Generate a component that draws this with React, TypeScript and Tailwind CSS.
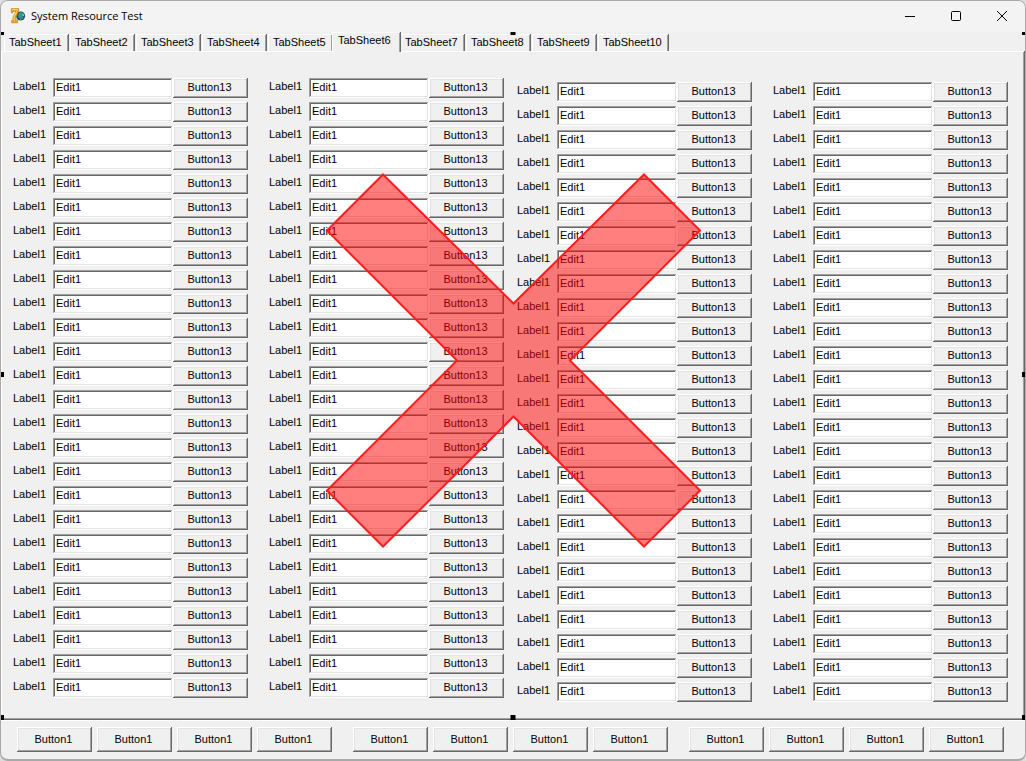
import { useState } from "react";

const TABS = Array.from({ length: 10 }, (_, index) => `TabSheet${index + 1}`);
const ROWS = Array.from({ length: 26 }, (_, index) => index);

const RAISED =
  "bg-[#f0f0f0] shadow-[inset_-1px_-1px_#696969,inset_1px_1px_#ffffff,inset_-2px_-2px_#a0a0a0,inset_2px_2px_#e3e3e3]";
const SUNKEN =
  "bg-white shadow-[inset_-1px_-1px_#ffffff,inset_1px_1px_#a0a0a0,inset_-2px_-2px_#e3e3e3,inset_2px_2px_#696969]";

const AppIcon = () => (
  <svg className="h-4 w-4 shrink-0" viewBox="0 0 16 16" aria-hidden="true">
    <circle cx="10.6" cy="8" r="4.5" fill="#1c4f83" />
    <path d="M8.500 5.500 11 4l2.500 2-1 2.500 1 1.500-3 2-1.500-2.500-1-1z" fill="#2f9a78" />
    <path d="M12 5l2 1.500v2l-1.500-1z" fill="#7cc4d8" />
    <path
      d="M1.300.6h7.400v2.200L6 9.200v3.200h1.600v2.400H1.600v-2.400H3V9l3-5.600H2.700v1.400H1.300z"
      fill="#f0a81c"
      stroke="#b8741c"
      strokeWidth=".6"
    />
    <path d="M1.900 1.400h5.900M6.700 3.400 4.200 8.800v4.200" fill="none" stroke="#ffe07a" strokeWidth=".9" />
  </svg>
);

const TitleBar = () => (
  <header className="flex h-[31px] items-center bg-[#f3f3f3] pb-px pl-[9px]">
    <AppIcon />
    <h1 className="ml-[5px] flex-1 font-['Open_Sans','Noto_Sans',sans-serif] text-[11px] leading-4">
      System Resource Test
    </h1>
    <button type="button" aria-label="Minimize" className="flex h-full w-[46px] items-center justify-center">
      <svg className="h-3 w-3" viewBox="0 0 12 12" stroke="#000" fill="none">
        <path d="M1 6.5h10" />
      </svg>
    </button>
    <button type="button" aria-label="Maximize" className="flex h-full w-[46px] items-center justify-center">
      <svg className="h-3 w-3" viewBox="0 0 12 12" stroke="#000" fill="none">
        <rect x="1.5" y="1.5" width="9" height="9" rx="1" />
      </svg>
    </button>
    <button type="button" aria-label="Close" className="flex h-full w-[46px] items-center justify-center">
      <svg className="h-3 w-3" viewBox="0 0 12 12" stroke="#000" fill="none">
        <path d="m1 1 10 10M11 1 1 11" />
      </svg>
    </button>
  </header>
);

const Tabs = ({
  selected,
  onSelect,
}: Readonly<{ selected: string; onSelect: (tab: string) => void }>) => (
  <div role="tablist" className="flex h-[19px] items-end gap-px pl-[3px]">
    {TABS.map((tab) => (
      <button
        key={tab}
        type="button"
        role="tab"
        aria-selected={tab === selected}
        className={
          tab === selected
            ? "z-10 -mx-0.5 -mb-px h-5 min-w-[69px] bg-[#f0f0f0] pr-2 pb-1 pl-1.5 text-left shadow-[inset_-1px_0_#696969,inset_1px_1px_#ffffff,inset_-2px_0_#a0a0a0]"
            : "h-[17px] min-w-[65px] pr-[7px] pb-px pl-[5px] text-left shadow-[inset_-1px_0_#696969,inset_1px_1px_#ffffff,inset_-2px_0_#a0a0a0]"
        }
        onClick={() => onSelect(tab)}
      >
        {tab}
      </button>
    ))}
  </div>
);

const FieldColumn = ({ id }: Readonly<{ id: string }>) => (
  <div className="flex min-w-0 flex-1 flex-col gap-1">
    {ROWS.map((row) => (
      <div key={row} className="flex h-5">
        <label htmlFor={`${id}-${row}`} className="w-10 shrink-0 leading-4">
          Label1
        </label>
        <input
          id={`${id}-${row}`}
          type="text"
          defaultValue="Edit1"
          spellCheck={false}
          className={`min-w-0 flex-1 px-[3px] pb-0.5 outline-none ${SUNKEN}`}
        />
        <button type="button" className={`w-[75px] shrink-0 pr-0.5 pb-0.5 ${RAISED}`}>
          Button13
        </button>
      </div>
    ))}
  </div>
);

const ButtonBar = () => (
  <footer className="flex gap-[21px] border-t border-white pt-[6px] pr-[21px] pb-[7px] pl-4">
    {["left", "center", "right"].map((group) => (
      <div key={group} className="flex flex-1 gap-[5px]">
        {[0, 1, 2, 3].map((button) => (
          <button key={button} type="button" className={`h-[25px] min-w-0 flex-1 pr-0.5 ${RAISED}`}>
            Button1
          </button>
        ))}
      </div>
    ))}
  </footer>
);

// Sizing grips around the page control
const Handles = () => (
  <div className="pointer-events-none absolute inset-0 z-20" aria-hidden="true">
    <i className="absolute top-0 left-0 h-[3px] w-[3px] bg-black" />
    <i className="absolute top-0 left-1/2 h-[3px] w-[5px] -translate-x-1/2 bg-black" />
    <i className="absolute top-0 right-0 h-[3px] w-[3px] bg-black" />
    <i className="absolute top-1/2 left-0 h-[5px] w-[3px] -translate-y-1 bg-black" />
    <i className="absolute top-1/2 right-0 h-[5px] w-[3px] -translate-y-1 bg-black" />
    <i className="absolute bottom-0 left-0 h-[5px] w-[3px] bg-black" />
    <i className="absolute bottom-0 left-1/2 h-[5px] w-[5px] -translate-x-1/2 bg-black" />
    <i className="absolute right-0 bottom-0 h-[5px] w-[3px] bg-black" />
  </div>
);

const Cross = () => (
  <svg
    className="pointer-events-none absolute top-[141px] left-1/2 z-30 h-[376px] w-[376px] -translate-x-1/2"
    viewBox="0 0 376 376"
    role="img"
    aria-label="Not allowed"
  >
    <path
      d="M58 1.5 188.500 130.500 319 1.500l56 56L245 187.500l130 130-56 56L188.500 243.500 58 373.500l-56-56L132 187.500 2 57.500z"
      fill="#ff0000"
      fillOpacity=".5"
      stroke="#ff1c1c"
      strokeWidth="2"
    />
  </svg>
);

export default function App() {
  const [selected, setSelected] = useState("TabSheet6");

  return (
    <div className="min-h-screen bg-[#dcdcdc] font-['Liberation_Sans',Arial,sans-serif] text-[11px] text-black">
      <main className="flex min-h-screen flex-col overflow-hidden rounded-lg border border-b-2 border-[#a9a9a9] bg-[#f0f0f0]">
        <TitleBar />
        <div className="relative flex flex-1 flex-col">
          <Tabs selected={selected} onSelect={setSelected} />
          <section
            role="tabpanel"
            aria-label={selected}
            className="flex flex-1 gap-[13px] pt-[27px] pr-[17px] pb-4 pl-3 shadow-[inset_-1px_-1px_#696969,inset_1px_1px_#ffffff,inset_-2px_-2px_#a0a0a0]"
          >
            <div className="flex min-w-0 flex-1 gap-[21px]">
              <FieldColumn id="a" />
              <FieldColumn id="b" />
            </div>
            <div className="flex min-w-0 flex-1 gap-[21px] pt-1">
              <FieldColumn id="c" />
              <FieldColumn id="d" />
            </div>
          </section>
          <Handles />
          <Cross />
        </div>
        <ButtonBar />
      </main>
    </div>
  );
}
